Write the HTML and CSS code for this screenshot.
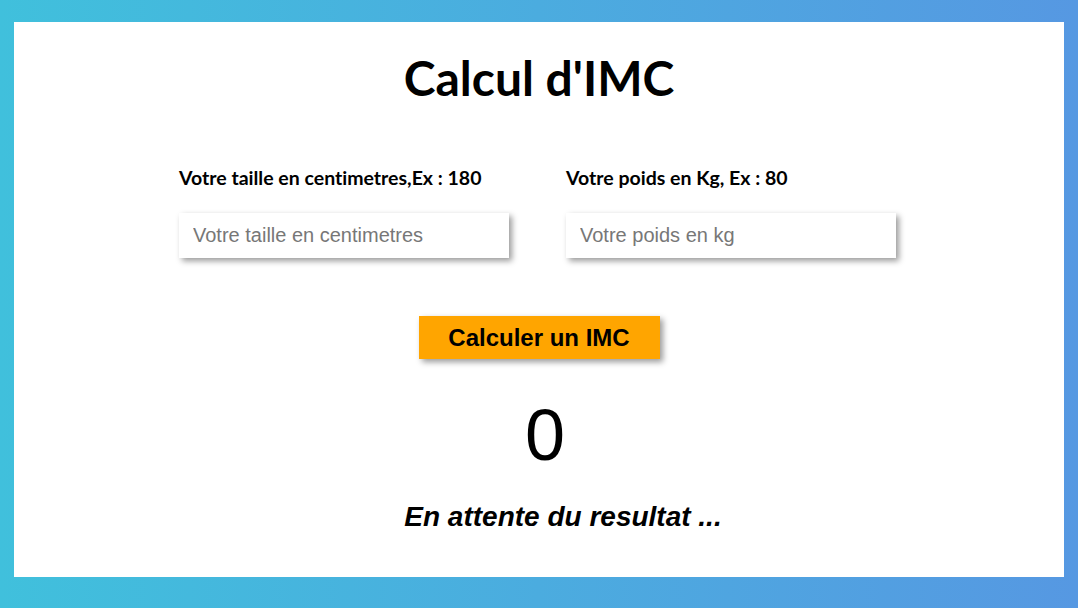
FILE: index.html
```html
<!DOCTYPE html>
<html lang="fr">
<head>
<meta charset="utf-8">
<title>Calcul d'IMC</title>
<link rel="stylesheet" href="styles.css">
</head>
<body>
<main class="card">
  <h1 class="title">Calcul d'IMC</h1>
  <div class="fields">
    <div class="field">
      <label class="label" for="taille">Votre taille en centimetres,Ex : 180</label>
      <input class="input" id="taille" type="text" placeholder="Votre taille en centimetres">
    </div>
    <div class="field">
      <label class="label" for="poids">Votre poids en Kg, Ex : 80</label>
      <input class="input" id="poids" type="text" placeholder="Votre poids en kg">
    </div>
  </div>
  <button class="btn" type="button">Calculer un IMC</button>
  <div class="value">0</div>
  <p class="result">En attente du resultat ...</p>
</main>
</body>
</html>
```

FILE: styles.css
```css
* { box-sizing: border-box; }

html, body { height: 100%; }

body {
  margin: 0;
  padding: 22px 14px 31px;
  background: linear-gradient(to right, #40c0dc, #5698e2);
}

.card {
  background: #fff;
  height: 555px;
  display: flex;
  flex-direction: column;
  align-items: center;
  padding-top: 27px;
}

.title {
  margin: 0;
  font-family: Lato, sans-serif;
  font-weight: 700;
  font-size: 48px;
  line-height: 58px;
  color: #000;
  font-variant-ligatures: none;
}

.fields {
  display: flex;
  gap: 57px;
  margin-top: 59px;
  margin-left: -3px;
}

.field {
  display: flex;
  flex-direction: column;
  width: 330px;
}

.label {
  font-family: Lato, sans-serif;
  font-weight: 700;
  font-size: 19.5px;
  line-height: 24px;
  color: #000;
  font-variant-ligatures: none;
}

.input {
  margin-top: 23px;
  width: 330px;
  height: 45px;
  border: none;
  outline: none;
  padding: 0 14px;
  font-family: "Liberation Sans", Arial, sans-serif;
  font-size: 20px;
  color: #333;
  background: #fff;
  box-shadow: 3px 3px 6px rgba(0, 0, 0, 0.4);
}

.input::placeholder { color: #777; }

.btn {
  margin-top: 58px;
  width: 241px;
  height: 43px;
  border: none;
  background: #ffa500;
  font-family: "Liberation Sans", Arial, sans-serif;
  font-weight: 700;
  font-size: 24px;
  color: #000;
  box-shadow: 3px 3px 6px rgba(0, 0, 0, 0.4);
  padding: 0;
}

.value {
  margin-top: 40px;
  padding-left: 12px;
  font-family: "Liberation Sans", Arial, sans-serif;
  font-size: 72px;
  line-height: 72px;
  color: #000;
}

.result {
  margin: 30px 0 0;
  padding-left: 48px;
  font-family: "Liberation Sans", Arial, sans-serif;
  font-weight: 700;
  font-style: italic;
  font-size: 28px;
  line-height: 32px;
  color: #000;
}
```
